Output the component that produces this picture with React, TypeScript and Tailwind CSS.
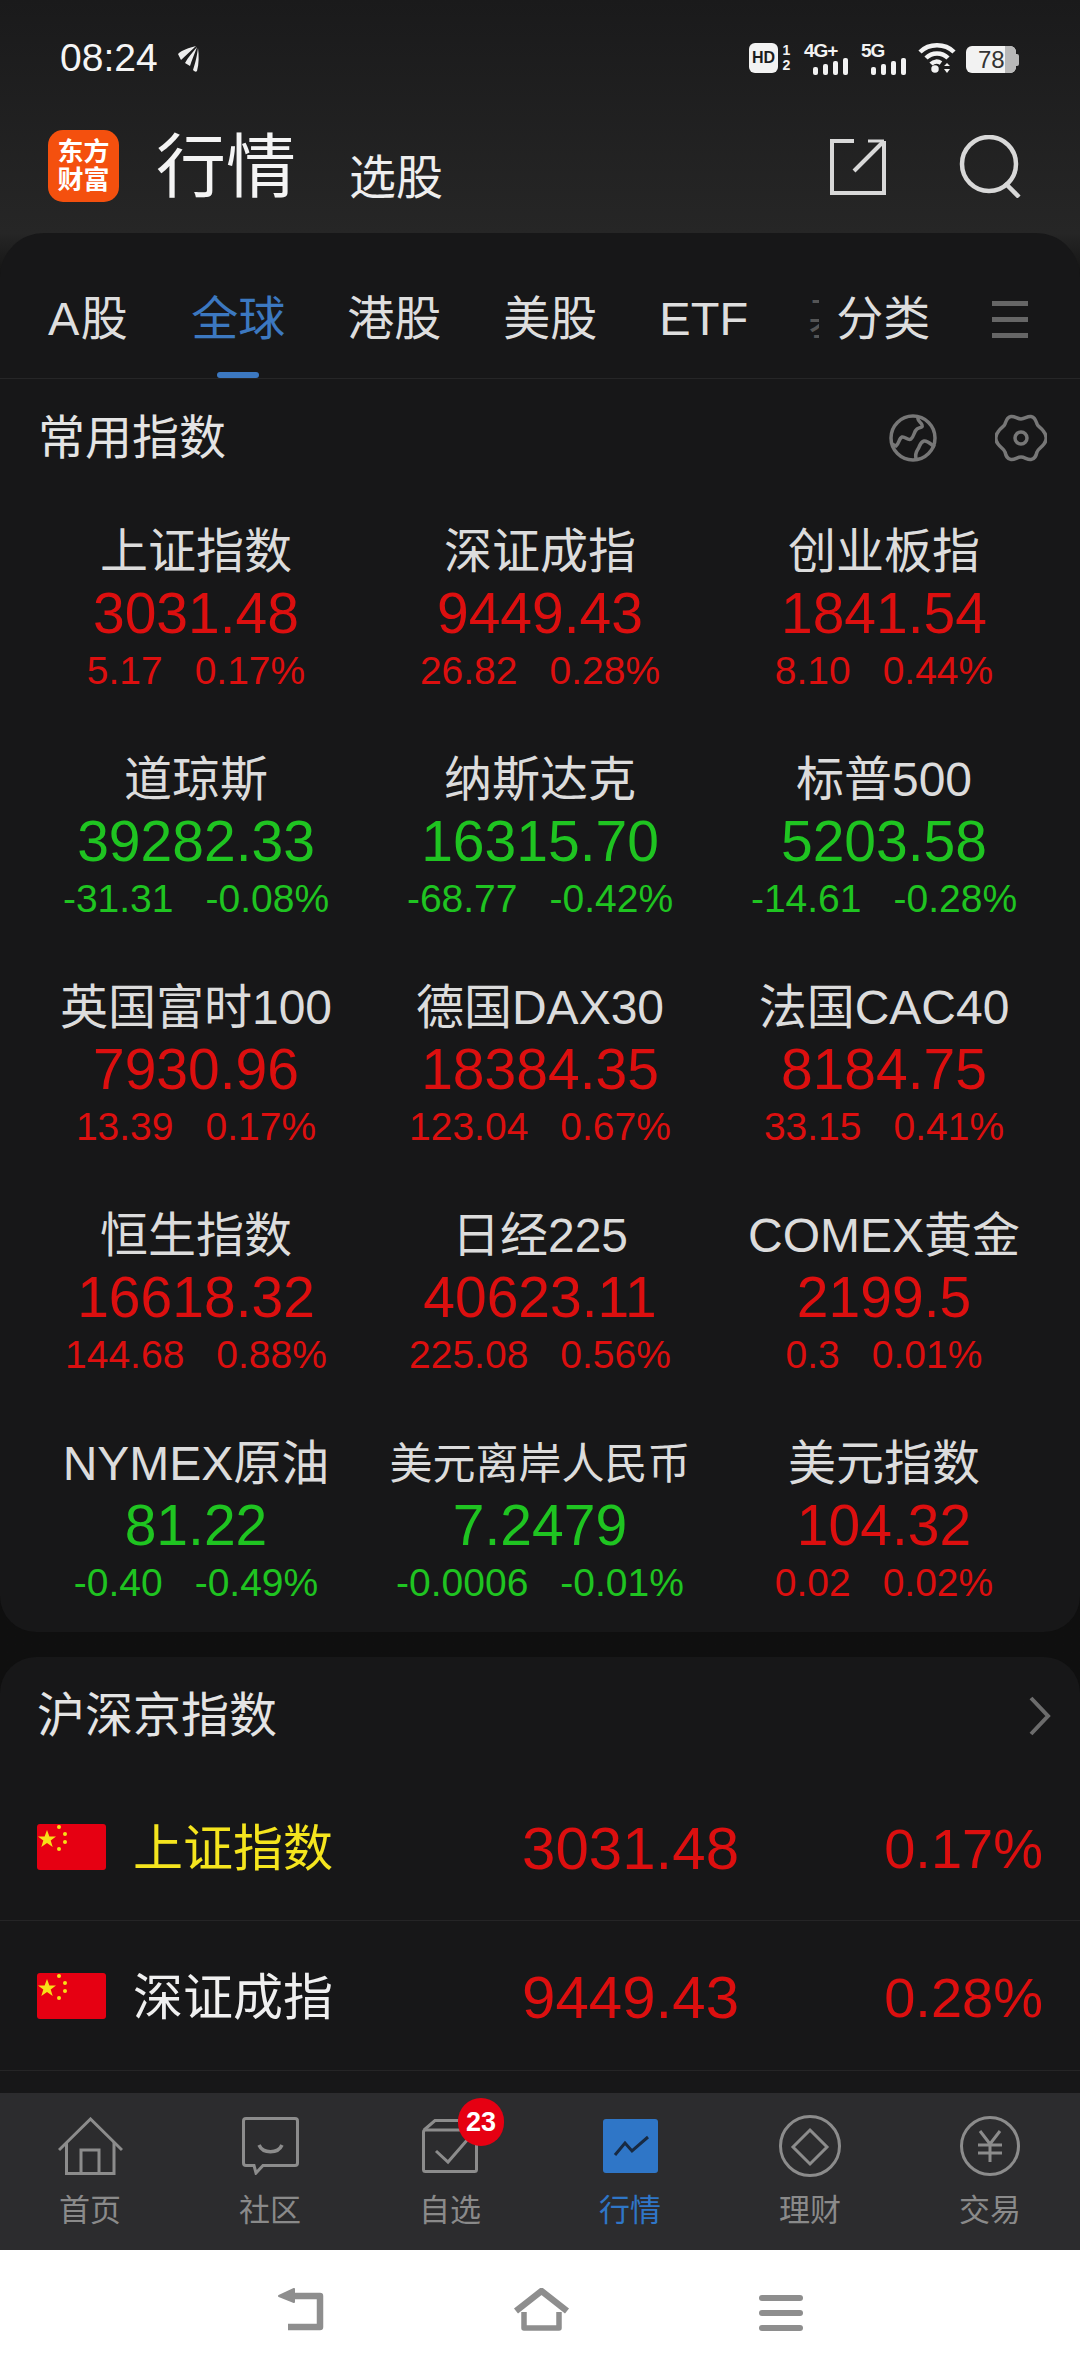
const FONT = "font-['Liberation_Sans','Noto_Sans_CJK_SC',sans-serif]";
const RED = 'text-[#dc0f0f]';
const GREEN = 'text-[#1fc421]';

type Quote = { name: string; price: string; chg: string; pct: string; up: boolean; small?: boolean };

const QUOTES: Quote[] = [
  { name: '上证指数', price: '3031.48', chg: '5.17', pct: '0.17%', up: true },
  { name: '深证成指', price: '9449.43', chg: '26.82', pct: '0.28%', up: true },
  { name: '创业板指', price: '1841.54', chg: '8.10', pct: '0.44%', up: true },
  { name: '道琼斯', price: '39282.33', chg: '-31.31', pct: '-0.08%', up: false },
  { name: '纳斯达克', price: '16315.70', chg: '-68.77', pct: '-0.42%', up: false },
  { name: '标普500', price: '5203.58', chg: '-14.61', pct: '-0.28%', up: false },
  { name: '英国富时100', price: '7930.96', chg: '13.39', pct: '0.17%', up: true },
  { name: '德国DAX30', price: '18384.35', chg: '123.04', pct: '0.67%', up: true },
  { name: '法国CAC40', price: '8184.75', chg: '33.15', pct: '0.41%', up: true },
  { name: '恒生指数', price: '16618.32', chg: '144.68', pct: '0.88%', up: true },
  { name: '日经225', price: '40623.11', chg: '225.08', pct: '0.56%', up: true },
  { name: 'COMEX黄金', price: '2199.5', chg: '0.3', pct: '0.01%', up: true },
  { name: 'NYMEX原油', price: '81.22', chg: '-0.40', pct: '-0.49%', up: false },
  { name: '美元离岸人民币', price: '7.2479', chg: '-0.0006', pct: '-0.01%', up: false, small: true },
  { name: '美元指数', price: '104.32', chg: '0.02', pct: '0.02%', up: true },
];

const TABS = ['A股', '全球', '港股', '美股', 'ETF'];

function Signal({ label, w }: { label: string; w: string }) {
  return (
    <div className={`h-[30px] flex flex-col items-start ${w}`}>
      <span className="text-[19px] leading-[15px] font-bold text-[#f2f2f2] tracking-[-1px]">{label}</span>
      <div className="mt-auto self-end flex items-end gap-[5px]">
        <div className="w-[5px] h-[8px] bg-[#f2f2f2] rounded-[2px]" />
        <div className="w-[5px] h-[11px] bg-[#f2f2f2] rounded-[2px]" />
        <div className="w-[5px] h-[14px] bg-[#f2f2f2] rounded-[2px]" />
        <div className="w-[5px] h-[17px] bg-[#f2f2f2] rounded-[2px]" />
      </div>
    </div>
  );
}

function StatusBar() {
  return (
    <div className="h-[116px] flex items-start justify-between pl-[60px] pr-[61px] pt-[39px]">
      <div className="flex items-center gap-[18px] text-[#f5f5f5]">
        <span className="text-[39px] leading-[38px]">08:24</span>
        <svg width="25" height="29" viewBox="5 5 25 29" fill="#eee">
          <path d="M25 7 C18 9 11 11 7 15 L10 21 C15 16 20 12 25 7Z" />
          <path d="M26 8 C22 13 17 18 14 24 L19 27 C21 20 24 14 26 8Z" />
          <path d="M27 9 C26 16 25 22 22 31 C24 33 25 33 26 32 C28 25 28 16 27 9Z" />
        </svg>
      </div>
      <div className="flex items-start mt-[4px]">
        <div className="w-[29px] h-[30px] rounded-[6px] bg-[#f2f2f2] flex items-center justify-center text-[16px] font-bold text-[#1b1c1d]">HD</div>
        <div className="w-[13px] ml-[2px] flex flex-col items-center text-[14px] leading-[15px] font-bold text-[#f2f2f2]">
          <span>1</span>
          <span>2</span>
        </div>
        <div className="ml-[11px]"><Signal label="4G+" w="w-[44px]" /></div>
        <div className="ml-[13px]"><Signal label="5G" w="w-[45px]" /></div>
        <svg className="ml-[12px]" width="38" height="30" viewBox="0 0 38 30" fill="none" stroke="#f2f2f2" strokeWidth="4.5">
          <path d="M2 9 C11 0 27 0 36 9" />
          <path d="M8 15 C14 9 24 9 30 15" />
          <path d="M13 21 C16 18 20 18 23 20" />
          <circle cx="17" cy="26" r="1.5" fill="#f2f2f2" />
          <path d="M29 20 L32 23 H26Z M29 30 L32 26 H26Z" fill="#f2f2f2" stroke="none" />
        </svg>
        <div className="ml-[10px] flex items-center mt-[3px]">
          <div className="relative w-[50px] h-[27px] rounded-[6px] bg-[#f2f2f2] overflow-hidden flex items-center pl-[12px]">
            <span className="text-[24px] leading-none text-[#333]">78</span>
            <div className="absolute right-0 top-0 bottom-0 w-[11px] bg-[#b8b8b8]" />
          </div>
          <div className="w-[3px] h-[12px] rounded-r-[2px] bg-[#b8b8b8]" />
        </div>
      </div>
    </div>
  );
}

function Header() {
  return (
    <div className="h-[117px] flex items-start pl-[48px] pr-[59px] pt-[14px]">
      <div className="w-[71px] h-[72px] rounded-[15px] bg-[#f4500e] flex flex-col items-center justify-center text-white text-[26px] leading-[28px] font-bold">
        <span>东方</span>
        <span>财富</span>
      </div>
      <span className="ml-[37px] mt-[2px] text-[70px] leading-[72px] text-[#f4f4f4]">行情</span>
      <span className="ml-[53px] mt-[21px] text-[47px] leading-[54px] text-[#eeeeee]">选股</span>
      <div className="ml-auto h-[72px] flex items-center gap-[73px]">
        <svg width="56" height="57" viewBox="0 0 56 57" fill="none" stroke="#d8d8d8" strokeWidth="4">
          <path d="M24 3 H2 V55 H54 V3" />
          <path d="M24 33 L53 4" />
          <path d="M38 3 H54" strokeWidth="3" />
        </svg>
        <svg width="62" height="63" viewBox="0 0 62 63" fill="none" stroke="#d8d8d8" strokeWidth="4.5">
          <circle cx="30" cy="29" r="27" />
          <path d="M46 48 L60 62" />
        </svg>
      </div>
    </div>
  );
}

function Tabs() {
  return (
    <div className="relative h-[146px] border-b border-[#262627] flex items-center pt-[28px] pl-[48px] text-[47px] text-[#dedede]">
      <div className="flex items-center gap-[62px]">
        {TABS.map(t => (
          <span key={t} className={t === '全球' ? 'text-[#3c78c0]' : t === 'A股' ? 'tracking-[1.5px]' : ''}>{t}</span>
        ))}
      </div>
      <span className="ml-[60px] w-[11px] overflow-hidden text-[#555] whitespace-nowrap">基</span>
      <span className="ml-[17px]">分类</span>
      <div className="ml-[62px] flex flex-col gap-[11px]">
        <div className="w-[36px] h-[5px] bg-[#666]" />
        <div className="w-[36px] h-[5px] bg-[#666]" />
        <div className="w-[36px] h-[5px] bg-[#666]" />
      </div>
      <div className="absolute left-[217px] bottom-0 w-[42px] h-[6px] rounded-[3px] bg-[#3c78c0]" />
    </div>
  );
}

function QuoteCell({ q }: { q: Quote }) {
  const color = q.up ? RED : GREEN;
  return (
    <div className="h-[228px] flex flex-col items-center">
      <div className={`mt-[1px] leading-[62px] text-[#dcdcdc] whitespace-nowrap ${q.small ? 'text-[43px]' : 'text-[48px]'}`}>{q.name}</div>
      <div className={`mt-[-1px] text-[57px] leading-[62px] whitespace-nowrap ${color}`}>{q.price}</div>
      <div className={`text-[39px] leading-[54px] whitespace-nowrap flex gap-[32px] ${color}`}>
        <span>{q.chg}</span>
        <span>{q.pct}</span>
      </div>
    </div>
  );
}

function Globe() {
  return (
    <svg width="48" height="48" viewBox="0 0 48 48" fill="none" stroke="#777" strokeWidth="3.5">
      <circle cx="24" cy="24" r="22" />
      <path d="M3 30 L7 32 C10 30 10 24 13 23 C16 22 19 27 22 25 C25 23 25 17 28 15 C31 13 34 14 33 11 C32 8 28 7 29 3" />
      <path d="M27 45 C26 41 27 38 29 35 C31 32 31 28 35 27 C39 26 42 31 46 33" />
    </svg>
  );
}

function Gear() {
  return (
    <svg width="52" height="48" viewBox="0 0 52 48" fill="none" stroke="#777" strokeWidth="3.5" strokeLinejoin="round">
      <path d="M26 5 C30 5 32 2 36 2.5 C40 3 41 7 42 10 C43 13 46 13 49 18 C52 22 52 26 49 30 C46 34 43 35 42 38 C41 42 40 45 36 45.5 C32 46 30 43 26 43 C22 43 20 46 16 45.5 C12 45 11 42 10 38 C9 35 6 34 3 30 C0 26 0 22 3 18 C6 13 9 13 10 10 C11 7 12 3 16 2.5 C20 2 22 5 26 5Z" />
      <circle cx="26" cy="24" r="6" />
    </svg>
  );
}

function Flag() {
  return (
    <svg width="69" height="46" viewBox="0 0 69 46" className="shrink-0">
      <rect width="69" height="46" rx="3" fill="#e60012" />
      <polygon points="10,6 12.4,12.5 19,12.5 13.7,16.5 15.7,23 10,19 4.3,23 6.3,16.5 1,12.5 7.6,12.5" fill="#f7e017" />
      <circle cx="22" cy="3" r="2" fill="#f7e017" />
      <circle cx="28" cy="10" r="2" fill="#f7e017" />
      <circle cx="28" cy="18" r="2" fill="#f7e017" />
      <circle cx="22" cy="25" r="2" fill="#f7e017" />
    </svg>
  );
}

function IndexRow({ name, price, pct, highlight }: { name: string; price: string; pct: string; highlight?: boolean }) {
  return (
    <div className={`flex items-center pl-[37px] pr-[37px] border-b border-[#252526] ${highlight ? 'h-[148px]' : 'h-[150px]'}`}>
      <Flag />
      <span className={`ml-[27px] pt-[4px] text-[50px] leading-none ${highlight ? 'text-[#f5e51e]' : 'text-[#f0f0f0]'}`}>{name}</span>
      <span className={`ml-auto pt-[4px] text-[60px] leading-none ${RED}`}>{price}</span>
      <span className={`w-[304px] pt-[4px] text-right text-[56px] leading-none ${RED}`}>{pct}</span>
    </div>
  );
}

const NAV = [
  {
    label: '首页',
    icon: (
      <svg width="65" height="58" viewBox="0 0 65 58" fill="none" stroke="#8c8c8c" strokeWidth="3">
        <path d="M1 33 L32.5 2 L64 33" />
        <path d="M8.5 25 V56.5 H56 V25" />
        <path d="M23 56.5 V33 H41 V56.5" />
      </svg>
    ),
  },
  {
    label: '社区',
    icon: (
      <svg width="57" height="58" viewBox="0 0 57 58" fill="none" stroke="#8c8c8c" strokeWidth="3">
        <path d="M4 1.5 H53 Q55.5 1.5 55.5 4 V46 Q55.5 48.5 53 48.5 H21 L14 56 L12 48.5 H4 Q1.5 48.5 1.5 46 V4 Q1.5 1.5 4 1.5Z" />
        <path d="M17 28 C21 37 36 37 40 28" strokeWidth="3.5" />
      </svg>
    ),
  },
  {
    label: '自选',
    icon: (
      <svg width="56" height="54" viewBox="0 0 56 54" fill="none" stroke="#8c8c8c" strokeWidth="3">
        <path d="M2 11 L13 1.5 H40" />
        <rect x="1.5" y="11" width="53" height="41.5" rx="2" />
        <path d="M14 32 L26 43 L46 20" />
      </svg>
    ),
    badge: '23',
  },
  {
    label: '行情',
    active: true,
    icon: (
      <svg width="55" height="54" viewBox="0 0 55 54">
        <rect width="55" height="54" rx="3" fill="#2f76c7" />
        <path d="M12 36 L22 24 L29 32 L45 18" fill="none" stroke="#182a42" strokeWidth="3" />
      </svg>
    ),
  },
  {
    label: '理财',
    icon: (
      <svg width="62" height="62" viewBox="0 0 62 62" fill="none" stroke="#8c8c8c" strokeWidth="3">
        <circle cx="31" cy="31" r="29.5" />
        <path d="M31 15 L48 32 L31 49 L14 32Z" />
      </svg>
    ),
  },
  {
    label: '交易',
    icon: (
      <svg width="60" height="60" viewBox="0 0 60 60" fill="none" stroke="#8c8c8c" strokeWidth="3">
        <circle cx="30" cy="30" r="28.5" />
        <path d="M20 15 L30 28 L40 15 M18 29 H42 M18 37 H42 M30 28 V46" />
      </svg>
    ),
  },
];

function BottomNav() {
  return (
    <div className="h-[157px] shrink-0 bg-[#2c2c2e] grid grid-cols-6">
      {NAV.map(n => (
        <div key={n.label} className="flex flex-col items-center">
          <div className="relative h-[62px] mt-[22px] flex items-center justify-center">
            {n.icon}
            {n.badge && (
              <div className="absolute left-[36px] top-[-17px] w-[46px] h-[48px] rounded-full bg-[#e60012] flex items-center justify-center text-white text-[27px] font-bold">
                {n.badge}
              </div>
            )}
          </div>
          <span className={`mt-[14px] text-[31px] leading-[40px] ${n.active ? 'text-[#2f76c7]' : 'text-[#8a8a8a]'}`}>{n.label}</span>
        </div>
      ))}
    </div>
  );
}

function SystemBar() {
  return (
    <div className="h-[126px] shrink-0 bg-white flex items-start justify-center pt-[38px]">
      <svg width="50" height="44" viewBox="0 0 50 44" fill="none" stroke="#8e8e8e" strokeWidth="6.5" strokeLinejoin="round">
        <path d="M10 8 H43 V39 H11" />
        <path d="M2 8 L17 1 V14Z" fill="#8e8e8e" strokeWidth="2" />
      </svg>
      <svg width="57" height="44" viewBox="0 0 57 44" className="ml-[186px]" fill="none" stroke="#8e8e8e" strokeWidth="6.5" strokeLinejoin="round">
        <path d="M3 23 L28.5 3 L54 23" />
        <path d="M11 24 V40 H46 V24" strokeWidth="5.5" />
      </svg>
      <div className="ml-[189px] mt-[7px] w-[44px] flex flex-col gap-[9px]">
        <div className="h-[6px] rounded-[3px] bg-[#8e8e8e]" />
        <div className="h-[6px] rounded-[3px] bg-[#8e8e8e]" />
        <div className="h-[6px] rounded-[3px] bg-[#8e8e8e]" />
      </div>
    </div>
  );
}

export default function App() {
  return (
    <div className={`w-[1080px] h-[2376px] overflow-hidden flex flex-col bg-[#0f0f0f] ${FONT}`}>
      <div className="bg-gradient-to-b from-[#1a1a1b] to-[#262626]">
        <StatusBar />
        <Header />
      </div>
      <div className="flex-1 min-h-0 overflow-hidden flex flex-col bg-gradient-to-b from-[#262626] to-[#0f0f0f] from-0% to-[3%]">
        <div className="bg-[#171718] rounded-t-[44px] rounded-b-[36px] h-[1399px] shrink-0">
          <Tabs />
          <div className="h-[116px] flex items-center justify-between pl-[38px] pr-[33px] pt-[2px]">
            <span className="text-[47px] text-[#e4e4e4]">常用指数</span>
            <div className="flex items-center gap-[58px]">
              <Globe />
              <Gear />
            </div>
          </div>
          <div className="grid grid-cols-[392px_296px_392px] pt-[25px]">
            {QUOTES.map(q => <QuoteCell key={q.name} q={q} />)}
          </div>
        </div>
        <div className="mt-[25px] flex-1 min-h-0 bg-[#171718] rounded-t-[36px] overflow-hidden">
          <div className="h-[116px] flex items-center justify-between pl-[37px] pr-[28px] pt-[2px]">
            <span className="text-[48px] text-[#e4e4e4]">沪深京指数</span>
            <svg width="24" height="40" viewBox="0 0 24 40" fill="none" stroke="#6c6c6c" strokeWidth="4">
              <path d="M3 2 L20 20 L3 38" />
            </svg>
          </div>
          <IndexRow name="上证指数" price="3031.48" pct="0.17%" highlight />
          <IndexRow name="深证成指" price="9449.43" pct="0.28%" />
        </div>
      </div>
      <BottomNav />
      <SystemBar />
    </div>
  );
}
